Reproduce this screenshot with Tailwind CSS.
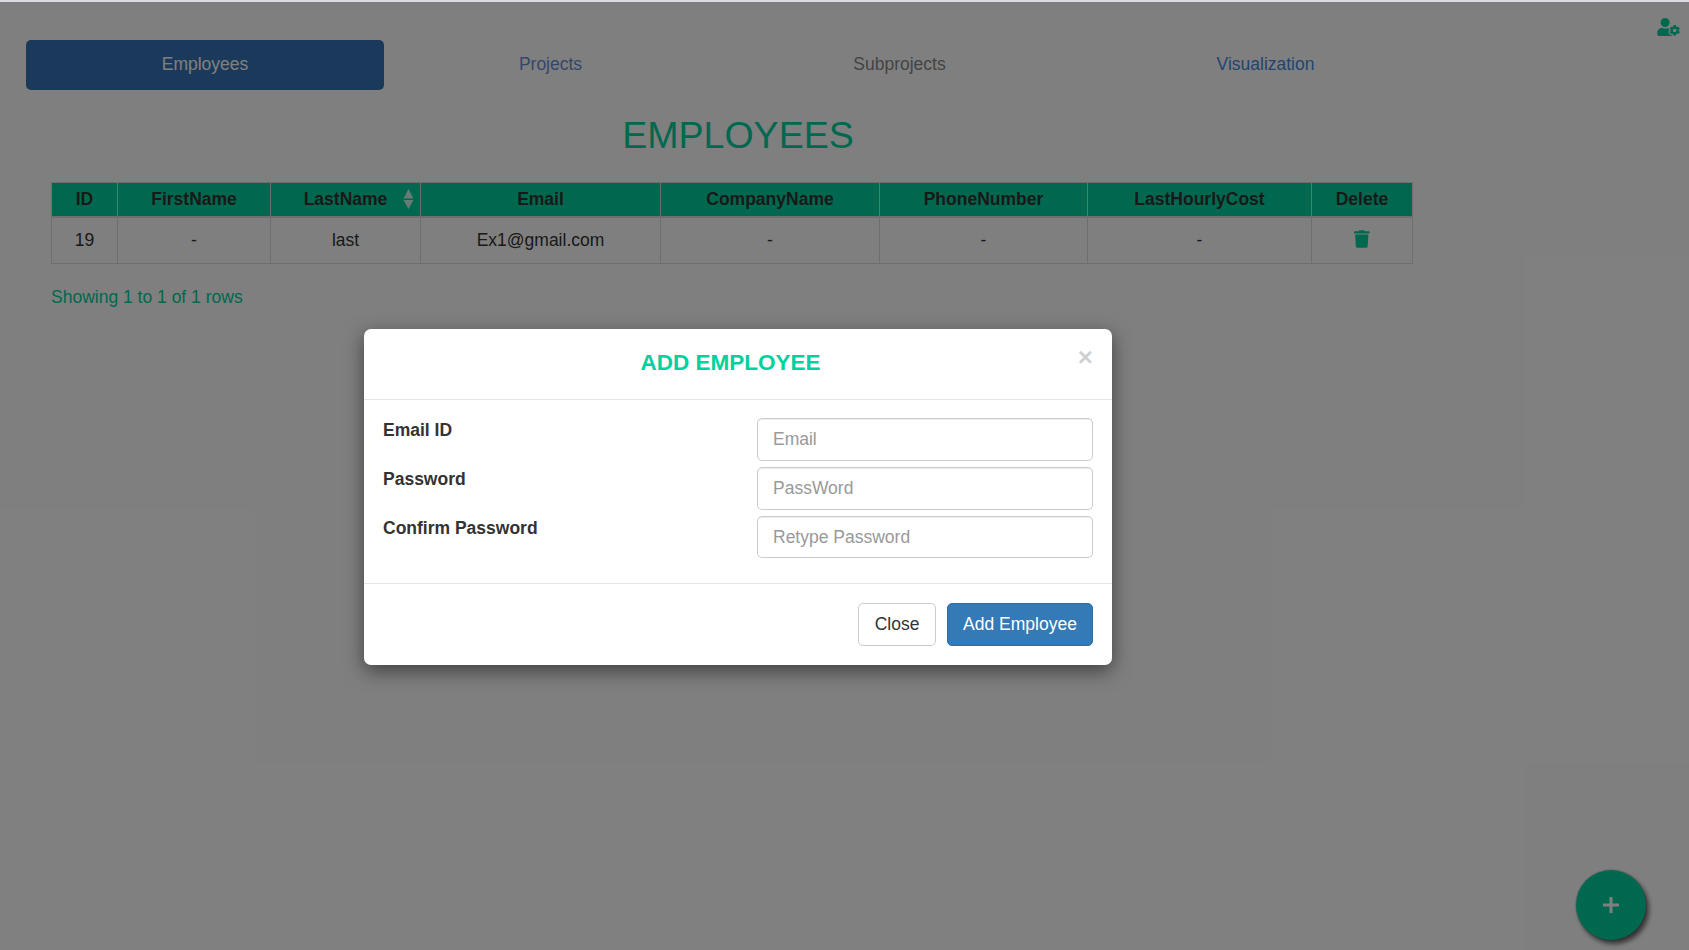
<!DOCTYPE html>
<html lang="en">
<head>
  <meta charset="UTF-8">
  <meta name="viewport" content="width=device-width, initial-scale=1.0">
  <title>Employees</title>
  <script src="https://cdn.jsdelivr.net/npm/@tailwindcss/browser@4"></script>
</head>
<body class="relative h-[950px] w-[1689px] overflow-hidden bg-white font-['Liberation_Sans',Arial,sans-serif] text-[17.5px] text-[#333]">
  <!-- Page -->
  <div class="border-t-2 border-[#dcdce0]">
    <div class="flex justify-end pt-[16px] pr-[9px] h-[38px]">
      <svg class="w-[23px] h-[18px] fill-[#00d19e]" viewBox="0 0 640 512"><path d="M610.5 373.3c2.6-14.1 2.6-28.5 0-42.6l25.8-14.9c3-1.7 4.3-5.2 3.3-8.5-6.7-21.6-18.2-41.2-33.2-57.4-2.3-2.5-6-3.1-9-1.4l-25.8 14.9c-10.9-9.3-23.4-16.5-36.9-21.3v-29.8c0-3.4-2.4-6.4-5.7-7.1-22.3-5-45-4.8-66.2 0-3.3.7-5.7 3.7-5.7 7.1v29.8c-13.5 4.8-26 12-36.9 21.3l-25.8-14.9c-2.9-1.7-6.7-1.1-9 1.4-15 16.2-26.5 35.8-33.2 57.4-1 3.3.4 6.8 3.3 8.5l25.8 14.9c-2.6 14.1-2.6 28.5 0 42.6l-25.8 14.9c-3 1.7-4.3 5.2-3.3 8.5 6.7 21.6 18.2 41.1 33.2 57.4 2.3 2.5 6 3.1 9 1.4l25.8-14.9c10.9 9.3 23.4 16.5 36.9 21.3v29.8c0 3.4 2.4 6.4 5.7 7.1 22.3 5 45 4.8 66.2 0 3.3-.7 5.7-3.7 5.7-7.1v-29.8c13.5-4.8 26-12 36.9-21.3l25.8 14.9c2.9 1.7 6.7 1.1 9-1.4 15-16.2 26.5-35.8 33.2-57.4 1-3.3-.4-6.8-3.3-8.5l-25.8-14.9zM496 400.5c-26.8 0-48.5-21.8-48.5-48.5s21.8-48.5 48.5-48.5 48.5 21.8 48.5 48.5-21.7 48.5-48.5 48.5zM224 256c70.7 0 128-57.3 128-128S294.7 0 224 0 96 57.3 96 128s57.3 128 128 128zm201.2 226.5c-2.3-1.2-4.6-2.6-6.8-3.9l-7.9 4.6c-6 3.4-12.8 5.3-19.6 5.3-10.9 0-21.4-4.6-28.9-12.6-18.3-19.8-32.3-43.9-40.2-69.6-5.5-17.7 1.9-36.4 17.9-45.7l7.9-4.6c-.1-2.6-.1-5.2 0-7.8l-7.9-4.6c-16-9.2-23.4-28-17.9-45.7.9-2.9 2.2-5.8 3.2-8.7-3.8-.3-7.5-1.2-11.4-1.2h-16.7c-22.2 10.2-46.9 16-72.9 16s-50.6-5.8-72.9-16h-16.7C60.2 288 0 348.2 0 422.4V464c0 26.5 21.5 48 48 48h352c10.1 0 19.5-3.2 27.2-8.5-1.2-3.8-2-7.7-2-11.8v-9.2z"/></svg>
    </div>

    <!-- Nav -->
    <nav class="ml-[26px] grid grid-cols-[358px_333px_365px_367px] w-[1423px] h-[50px] text-center">
      <a class="flex items-center justify-center pb-[2px] rounded-[5px] bg-[#3674b6] text-[#fff]">Employees</a>
      <a class="flex items-center justify-center pb-[2px] text-[#6690d2]">Projects</a>
      <a class="flex items-center justify-center pb-[2px] text-[#888]">Subprojects</a>
      <a class="flex items-center justify-center pb-[2px] text-[#4a88de]">Visualization</a>
    </nav>

    <main class="w-[1476px]">
      <h1 class="mt-[24px] h-[43px] text-center text-[37.5px] leading-[43px] font-normal text-[#00d19e]">EMPLOYEES</h1>

      <table class="ml-[51px] mt-[25px] w-[1361px] table-fixed border-collapse text-center text-[#333]">
        <colgroup>
          <col class="w-[66px]"><col class="w-[153px]"><col class="w-[150px]"><col class="w-[240px]"><col class="w-[219px]"><col class="w-[208px]"><col class="w-[224px]"><col class="w-[101px]">
        </colgroup>
        <thead>
          <tr class="h-[34px] bg-[#00d19e] font-bold">
            <th class="border border-b-2 border-[#ddd] p-0">ID</th>
            <th class="border border-b-2 border-[#ddd] p-0">FirstName</th>
            <th class="relative border border-b-2 border-[#ddd] p-0">LastName
              <svg class="absolute right-[6px] top-[6px] w-[11px] h-[20px] fill-white/80" viewBox="0 0 11 20"><path d="M5.5 0L10.5 9.5H.5zM.5 11H10.5L5.5 20z"/></svg>
            </th>
            <th class="border border-b-2 border-[#ddd] p-0">Email</th>
            <th class="border border-b-2 border-[#ddd] p-0">CompanyName</th>
            <th class="border border-b-2 border-[#ddd] p-0">PhoneNumber</th>
            <th class="border border-b-2 border-[#ddd] p-0">LastHourlyCost</th>
            <th class="border border-b-2 border-[#ddd] p-0">Delete</th>
          </tr>
        </thead>
        <tbody>
          <tr class="h-[47px]">
            <td class="border border-[#ddd] p-0 pb-[1px]">19</td>
            <td class="border border-[#ddd] p-0 pb-[1px]">-</td>
            <td class="border border-[#ddd] p-0 pb-[1px]">last</td>
            <td class="border border-[#ddd] p-0 pb-[1px]">Ex1@gmail.com</td>
            <td class="border border-[#ddd] p-0 pb-[1px]">-</td>
            <td class="border border-[#ddd] p-0 pb-[1px]">-</td>
            <td class="border border-[#ddd] p-0 pb-[1px]">-</td>
            <td class="border border-[#ddd] p-0">
              <svg class="mx-auto mb-[3px] w-[15.5px] h-[18px] fill-[#00d19e]" viewBox="0 0 448 512"><path d="M432 32H312l-9.4-18.7A24 24 0 0 0 281.1 0H166.8a23.72 23.72 0 0 0-21.4 13.3L136 32H16A16 16 0 0 0 0 48v32a16 16 0 0 0 16 16h416a16 16 0 0 0 16-16V48a16 16 0 0 0-16-16zM53.2 467a48 48 0 0 0 47.9 45h245.8a48 48 0 0 0 47.9-45L416 128H32z"/></svg>
            </td>
          </tr>
        </tbody>
      </table>

      <p class="ml-[51px] mt-[20px] text-[#00d19e]">Showing 1 to 1 of 1 rows</p>
    </main>
  </div>

  <!-- Floating add button -->
  <button class="absolute left-[1576px] top-[870px] flex h-[70px] w-[70px] items-center justify-center rounded-full bg-[#00d19e] text-white shadow-[3px_4px_5px_rgba(0,0,0,0.6),0_0_0_1px_rgba(0,0,0,0.12)]">
    <svg class="w-[16px] h-[16px] fill-white" viewBox="0 0 16 16"><path d="M6.5 0h3v6.5H16v3H9.5V16h-3V9.5H0v-3h6.5z"/></svg>
  </button>

  <!-- Backdrop -->
  <div class="absolute inset-x-0 top-[2px] bottom-0 bg-black/50"></div>

  <!-- Modal -->
  <div class="absolute left-[364px] top-[329px] w-[748px] h-[336px] rounded-[7px] bg-white shadow-[0_6px_19px_rgba(0,0,0,0.5)]">
    <div class="relative h-[71px] border-b border-[#e5e5e5] pt-[21px] text-center">
      <h4 class="pr-[15px] text-[22.5px] leading-[26px] font-bold text-[#00d19e]">ADD EMPLOYEE</h4>
      <button class="absolute right-[19px] top-[15px] text-[26px] leading-[26px] font-bold text-[#000]/20">×</button>
    </div>
    <div class="h-[184px] border-b border-[#e5e5e5] px-[19px] pt-[18px]">
      <div class="grid grid-cols-[374px_336px] grid-rows-[43px_43px_42px] gap-y-[6px] font-bold leading-[24px]">
        <label>Email ID</label>
        <input class="h-[43px] rounded-[5px] border border-[#ccc] px-[15px] font-normal shadow-[inset_0_1px_1px_rgba(0,0,0,0.075)] placeholder:text-[#999]" placeholder="Email">
        <label>Password</label>
        <input class="h-[43px] rounded-[5px] border border-[#ccc] px-[15px] font-normal shadow-[inset_0_1px_1px_rgba(0,0,0,0.075)] placeholder:text-[#999]" placeholder="PassWord">
        <label>Confirm Password</label>
        <input class="h-[42px] rounded-[5px] border border-[#ccc] px-[15px] font-normal shadow-[inset_0_1px_1px_rgba(0,0,0,0.075)] placeholder:text-[#999]" placeholder="Retype Password">
      </div>
    </div>
    <div class="flex justify-end gap-[11px] px-[19px] pt-[19px]">
      <button class="h-[43px] w-[78px] rounded-[5px] border border-[#ccc] bg-white text-[#333]">Close</button>
      <button class="h-[43px] w-[146px] rounded-[5px] border border-[#2e6da4] bg-[#337ab7] text-white">Add Employee</button>
    </div>
  </div>
</body>
</html>
